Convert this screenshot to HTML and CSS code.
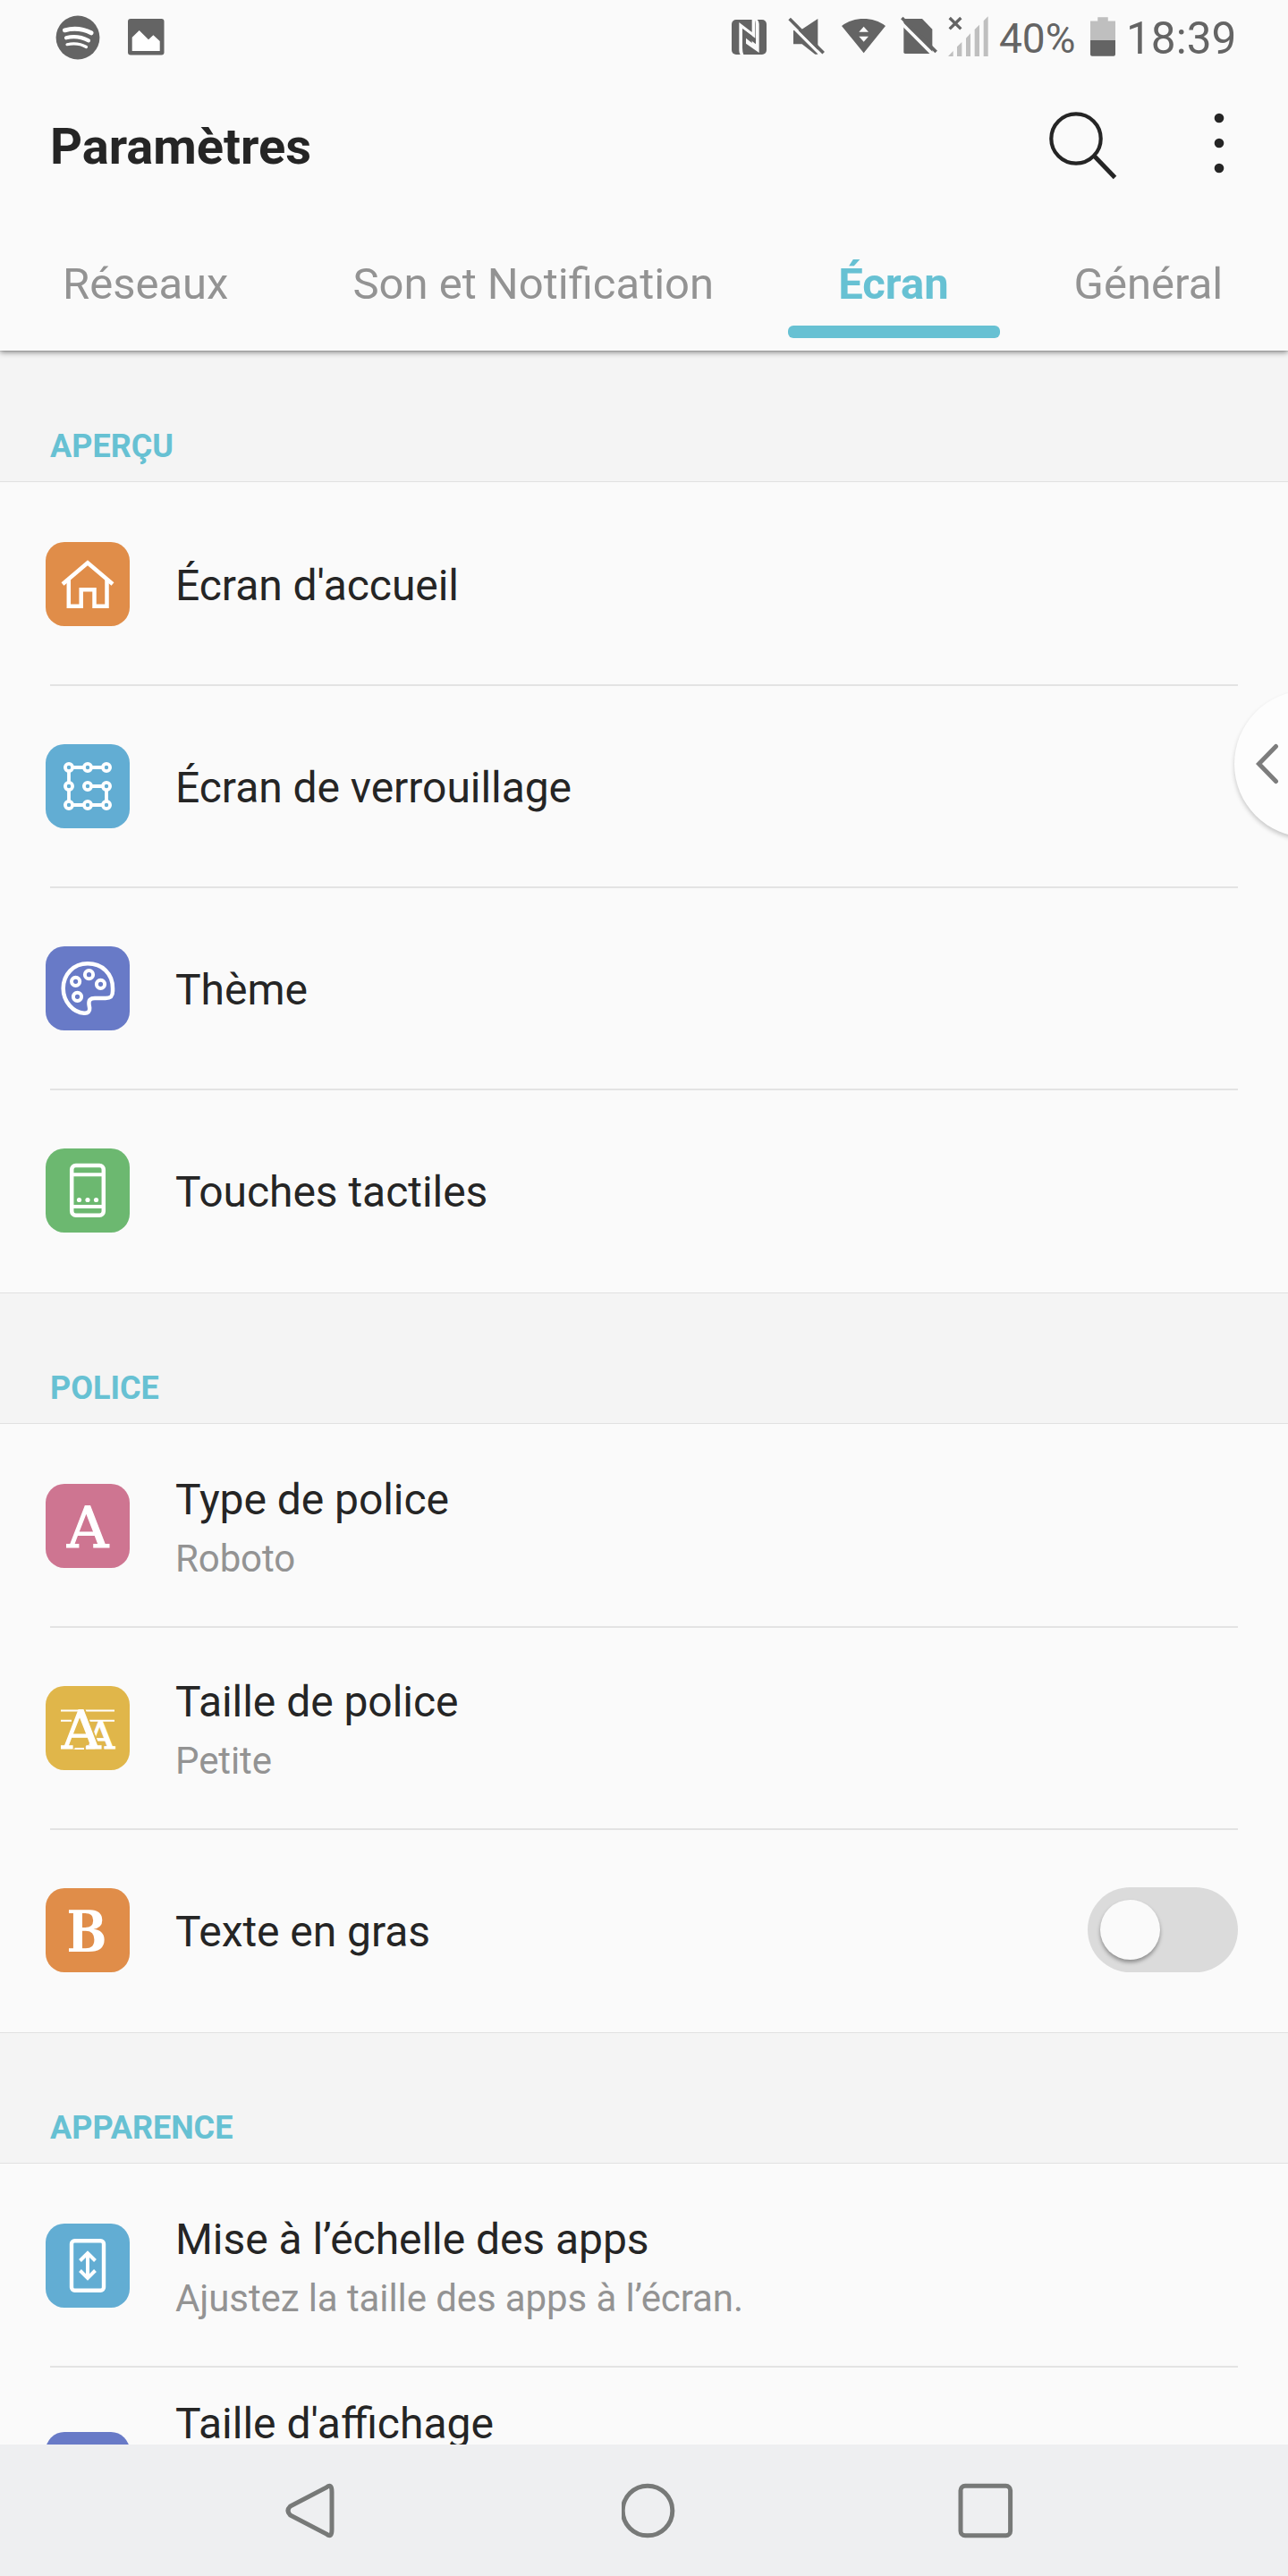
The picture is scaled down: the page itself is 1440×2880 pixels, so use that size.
FILE: index.html
```
<!DOCTYPE html>
<html lang="fr">
<head>
  <meta charset="UTF-8" />
  <meta name="viewport" content="width=device-width, initial-scale=1.0" />
  <title>Paramètres</title>
  <link rel="stylesheet" href="styles.css">
</head>
<body>
<div class="screen">
  <header class="header">
    <!-- Barre d'état -->
    <div class="status">
      <div class="status-left">
        <svg width="50" height="50" viewBox="0 0 50 50">
          <circle cx="25" cy="25" r="24.4" fill="#646464" />
          <g fill="none" stroke="#fff" stroke-linecap="round">
            <path d="M10.5 16.8C20 14.3 31 15.3 40 19.8" stroke-width="5" />
            <path d="M12 25.3C20 23.3 29 24.3 37 28.3" stroke-width="4.2" />
            <path d="M13 32.7C20 31.3 28 31.8 34.5 35.5" stroke-width="3.2" />
          </g>
        </svg>
        <svg class="picture" width="41" height="41" viewBox="0 0 41 41">
          <rect width="40.5" height="40.5" rx="3" fill="#646464" />
          <path d="M4.7 20.7L12.7 13L23 23.3L28.4 18.3L35.7 25V36H4.7Z" fill="#fff" />
        </svg>
      </div>
      <div class="status-right">
        <svg width="39" height="60" viewBox="39 0 117 180">
          <rect x="39" y="36" width="117" height="117" rx="15" fill="#646464" />
          <path d="M64 45L107 78V36H118V98L75 66V130Q75 145 79 153H68Q64 147 64 140Z" fill="#fafafa" />
          <path d="M131 147L87 116V92L120 118V50Q120 42 116 36H125Q131 42 131 50Z" fill="#fafafa" />
          <path d="M107 46V114L87 98V92L75 66L107 90Z" fill="#646464" />
        </svg>
        <svg class="mute" width="41" height="60" viewBox="229 0 123 180">
          <path d="M247 72H270L329 33V152H320L276 118H247Z" fill="#646464" />
          <path d="M231 46L339 154" stroke="#fafafa" stroke-width="10" />
          <path d="M234 33L348 148" stroke="#646464" stroke-width="11" />
        </svg>
        <svg class="wifi" width="49" height="60" viewBox="408 0 147 180">
          <path d="M408 57C450 25 513 25 555 57L482 148Z" fill="#646464" />
          <path d="M482 59L498 77H466ZM466 92H498L482 110Z" fill="#fafafa" />
        </svg>
        <svg class="sim" width="41" height="60" viewBox="605 0 123 180">
          <path d="M615 33H677L711 68V145Q711 150 706 150H620Q615 150 615 145Z" fill="#646464" />
          <path d="M606 46L715 155" stroke="#fafafa" stroke-width="11" />
          <path d="M609 30L724 144" stroke="#646464" stroke-width="11" />
        </svg>
        <svg class="signal" width="45" height="60" viewBox="765 0 135 180">
          <path d="M770 30L808 67M808 30L770 67" stroke="#646464" stroke-width="10" />
          <path d="M765 159L782 141V159ZM795 159V127L811 111V159ZM825 159V98L840 82V159ZM854 159V69L870 53V159ZM884 159V40L899 25V159Z" fill="#bfbfbf" />
        </svg>
        <span class="percent">40%</span>
        <svg class="battery" width="28" height="60" viewBox="1242 0 85 180">
          <path d="M1242 40H1267V27H1302V40H1327V105H1242Z" fill="#bfbfbf" />
          <path d="M1242 105H1327V153Q1327 159 1321 159H1248Q1242 159 1242 153Z" fill="#646464" />
        </svg>
        <span class="clock">18:39</span>
      </div>
    </div>

    <div class="title-bar">
      <h1>Paramètres</h1>
      <svg class="search" width="80" height="80" viewBox="0 0 80 80" fill="none" stroke="#252525" stroke-width="4.2">
        <circle cx="33" cy="33" r="27.7" />
        <path d="M53 52L76.5 76.5" stroke-width="5" />
      </svg>
      <svg class="more" width="12" height="68" viewBox="0 0 12 68" fill="#252525">
        <circle cx="6" cy="6" r="5.3" />
        <circle cx="6" cy="34" r="5.3" />
        <circle cx="6" cy="62" r="5.3" />
      </svg>
    </div>

    <nav class="tabs">
      <a class="tab">Réseaux</a>
      <a class="tab">Son et Notification</a>
      <a class="tab active">Écran</a>
      <a class="tab">Général</a>
    </nav>
  </header>

  <main class="content">
    <h2 class="section-title">APERÇU</h2>
    <div class="section">
      <div class="row">
        <svg class="icon orange" viewBox="0 0 94 94">
          <path d="M19 47L47 23.3L75 47" />
          <path d="M25.8 41V71.7H39.7V53.3H54.5V71.7H68.5V41" />
        </svg>
        <div class="text"><div class="label">Écran d'accueil</div></div>
      </div>
      <div class="row">
        <svg class="icon blue" viewBox="0 0 94 94">
          <g stroke-width="3.8">
            <path d="M30 26H43M51 26H64M26 30V43M26 51V64M30 68H43M51 68H64M68 64V51M64 47H51" />
            <circle cx="26" cy="26" r="4.1" /><circle cx="47" cy="26" r="4.1" /><circle cx="68" cy="26" r="4.1" />
            <circle cx="26" cy="47" r="4.1" /><circle cx="47" cy="47" r="4.1" /><circle cx="68" cy="47" r="4.1" />
            <circle cx="26" cy="68" r="4.1" /><circle cx="47" cy="68" r="4.1" /><circle cx="68" cy="68" r="4.1" />
          </g>
        </svg>
        <div class="text"><div class="label">Écran de verrouillage</div></div>
      </div>
      <div class="row">
        <svg class="icon purple" viewBox="0 0 94 94">
          <path d="M75 47C75 30 63 19.3 47 19.3C31 19.3 19.7 31.5 19.7 47C19.7 62 31 74 43 74.7C47.5 75 49.5 73 49.2 69L48.5 65C48 60 50 58 55 58H67C73 58 75 56 75 50Z" />
          <g stroke-width="4">
            <circle cx="33.6" cy="39.3" r="4.6" />
            <circle cx="48.5" cy="31.7" r="4.6" />
            <circle cx="61.5" cy="42.3" r="4.6" />
            <circle cx="35.5" cy="56.3" r="4.6" />
          </g>
        </svg>
        <div class="text"><div class="label">Thème</div></div>
      </div>
      <div class="row">
        <svg class="icon green" viewBox="0 0 94 94">
          <rect x="29.2" y="19" width="35.6" height="55.7" rx="4.5" />
          <path d="M29 29.3H65M29 65H65" stroke-width="4" />
          <g fill="#fff" stroke="none">
            <circle cx="37.5" cy="57.5" r="2.6" />
            <circle cx="47" cy="57.5" r="2.6" />
            <circle cx="56.5" cy="57.5" r="2.6" />
          </g>
        </svg>
        <div class="text"><div class="label">Touches tactiles</div></div>
      </div>
    </div>

    <h2 class="section-title">POLICE</h2>
    <div class="section">
      <div class="row">
        <svg class="icon pink" viewBox="0 0 94 94">
          <text class="glyph" x="47" y="70.5" font-size="64" text-anchor="middle">A</text>
        </svg>
        <div class="text two-lines">
          <div class="label">Type de police</div>
          <div class="sub">Roboto</div>
        </div>
      </div>
      <div class="row">
        <svg class="icon yellow" viewBox="0 0 94 94">
          <path d="M17 27.5H77M17 38.7H29M49 38.7H77M31 70H43" stroke-width="2" />
          <text class="glyph" x="46" y="70.3" font-size="43">A</text>
          <text class="glyph front" x="18" y="70.3" font-size="60">A</text>
        </svg>
        <div class="text two-lines">
          <div class="label">Taille de police</div>
          <div class="sub">Petite</div>
        </div>
      </div>
      <div class="row">
        <svg class="icon orange" viewBox="0 0 94 94">
          <text class="glyph bold" x="46" y="71" font-size="64" text-anchor="middle" textLength="45" lengthAdjust="spacingAndGlyphs">B</text>
        </svg>
        <div class="text"><div class="label">Texte en gras</div></div>
        <div class="switch"><div class="knob"></div></div>
      </div>
    </div>

    <h2 class="section-title">APPARENCE</h2>
    <div class="section">
      <div class="row">
        <svg class="icon blue" viewBox="0 0 94 94">
          <rect x="29" y="19.2" width="36" height="55.6" rx="3.5" stroke-width="4.4" />
          <path d="M47 33V61M38.5 41.5L47 33L55.5 41.5M38.5 52.5L47 61L55.5 52.5" stroke-width="4" />
        </svg>
        <div class="text two-lines">
          <div class="label">Mise à l’échelle des apps</div>
          <div class="sub">Ajustez la taille des apps à l’écran.</div>
        </div>
      </div>
      <div class="row tall">
        <svg class="icon purple" viewBox="0 0 94 94"></svg>
        <div class="text"><div class="label">Taille d'affichage</div></div>
      </div>
    </div>
  </main>

  <!-- Boutons de navigation -->
  <footer class="nav-bar">
    <svg viewBox="0 0 62 62"><path d="M46 5Q52 0 52 10V52Q52 62 46 57L5.5 36Q0.5 31 5.5 26Z" /></svg>
    <svg viewBox="0 0 62 62"><circle cx="29" cy="31" r="27.8" /></svg>
    <svg viewBox="0 0 62 62"><rect x="3" y="3.2" width="55.6" height="55.6" rx="5" /></svg>
  </footer>

  <div class="edge-handle">
    <svg width="26" height="46" viewBox="0 0 26 46"><path d="M22.5 3.5L3.5 23L22.5 42.5" /></svg>
  </div>
</div>
</body>
</html>
```
FILE: styles.css
```
* {
  box-sizing: border-box;
}

body {
  margin: 0;
  font-family: Roboto, sans-serif;
  background: #fafafa;
  color: #252525;
}

svg {
  display: block;
  flex-shrink: 0;
}

.screen {
  position: relative;
  display: flex;
  flex-direction: column;
  width: 1440px;
  height: 2880px;
  overflow: hidden;
}

/* header */
.header {
  position: relative;
  z-index: 1;
  flex: none;
  height: 392px;
  background: #fafafa;
  box-shadow: 0 2px 6px rgba(0, 0, 0, 0.45);
}

.status {
  display: flex;
  justify-content: space-between;
  height: 84px;
  padding: 10px 54px 0 62px;
  color: #646464;
}

.status-left {
  display: flex;
  align-items: center;
  height: 63px;
}

.picture {
  margin-left: 31px;
}

.status-right {
  display: flex;
  height: 60px;
  line-height: 66px;
}

.mute {
  margin-left: 24px;
}

.wifi {
  margin-left: 19px;
}

.sim {
  margin-left: 17px;
}

.signal {
  margin-left: 12px;
}

.percent {
  width: 86px;
  margin-left: 12px;
  font-size: 46px;
}

.battery {
  margin-left: 16px;
}

.clock {
  width: 127px;
  margin-left: 12px;
  font-size: 49.5px;
}

.title-bar {
  display: flex;
  align-items: center;
  height: 156px;
  padding: 0 71px 0 56px;
}

.title-bar h1 {
  flex: 1;
  margin: 4px 0 0;
  font-size: 56px;
  line-height: 66px;
}

.search {
  margin-right: 107px;
}

.more {
  margin-top: -4px;
}

.tabs {
  display: flex;
  gap: 27px;
  height: 138px;
  padding-left: 14px;
}

.tab {
  padding: 0 56px;
  font-size: 49px;
  line-height: 155px;
  color: #939393;
  white-space: nowrap;
}

.active {
  position: relative;
  margin-right: 1px;
  color: #67c1d3;
  font-weight: bold;
}

.active::after {
  content: "";
  position: absolute;
  left: 0;
  right: -1px;
  bottom: 0;
  height: 14px;
  border-radius: 6px;
  background: #67c1d3;
}

/* list */
.content {
  flex: 1;
  min-height: 0;
  overflow: hidden;
}

.section-title {
  height: 147px;
  margin: 0;
  padding: 85px 56px 0;
  border-top: 1px solid #e1e1e1;
  border-bottom: 1px solid #e1e1e1;
  background: #f4f4f4;
  color: #67c1d3;
  font-size: 36px;
  line-height: 42px;
}

.section {
  padding: 0 56px 2px;
}

.row {
  display: flex;
  align-items: center;
  height: 226px;
  border-top: 2px solid #e3e3e3;
}

.row:first-child {
  border-top-color: transparent;
}

.icon {
  width: 94px;
  height: 94px;
  margin: 0 51px 0 -5px;
  border-radius: 21px;
  fill: none;
  stroke: #fff;
  stroke-width: 4.5px;
}

.glyph {
  font-family: "DejaVu Serif", serif;
  fill: #fff;
  stroke: #fff;
  stroke-width: 1.2px;
}

/* cuts the small A off from the big one */
.glyph.front {
  filter: drop-shadow(2px 0 0 #e0b64a);
}

.glyph.bold {
  font-family: "DejaVu Serif Condensed", "DejaVu Serif", serif;
  font-weight: bold;
  stroke: none;
}

.orange { background: #e08d49; }
.blue { background: #62add3; }
.purple { background: #687ac7; }
.green { background: #6cb870; }
.pink { background: #ce7591; }
.yellow { background: #e0b64a; }

.text {
  flex: 1;
  padding-top: 3px;
}

.two-lines {
  padding-top: 1px;
}

.label {
  font-size: 48px;
  line-height: 72px;
  letter-spacing: -0.05px;
}

.sub {
  color: #939393;
  font-size: 42px;
  line-height: 60px;
  letter-spacing: -0.1px;
}

.tall {
  height: 240px;
}

.tall .text {
  align-self: flex-start;
  padding-top: 27px;
}

/* keeps the ffi ligature */
.tall .label {
  letter-spacing: normal;
}

.switch {
  width: 168px;
  height: 95px;
  margin-top: -1px;
  padding: 14px;
  border-radius: 48px;
  background: #dbdbdb;
}

.knob {
  width: 67px;
  height: 67px;
  border-radius: 50%;
  background: #fafafa;
  box-shadow: 0 3px 4px rgba(0, 0, 0, 0.35);
}

/* bottom bar */
.nav-bar {
  display: flex;
  flex: none;
  justify-content: space-between;
  align-items: center;
  height: 147px;
  padding: 0 307px 0 319px;
  background: #eeeff1;
}

.nav-bar svg {
  width: 62px;
  height: 62px;
  fill: none;
  stroke: #777978;
  stroke-width: 5px;
}

.edge-handle {
  position: absolute;
  top: 772px;
  left: 1380px;
  display: flex;
  align-items: center;
  width: 164px;
  height: 164px;
  padding-left: 24px;
  border-radius: 50%;
  background: #fdfdfd;
  box-shadow: 0 3px 5px rgba(0, 0, 0, 0.2);
}

.edge-handle path {
  fill: none;
  stroke: #7d7d7d;
  stroke-width: 5px;
  stroke-linecap: round;
}
```
